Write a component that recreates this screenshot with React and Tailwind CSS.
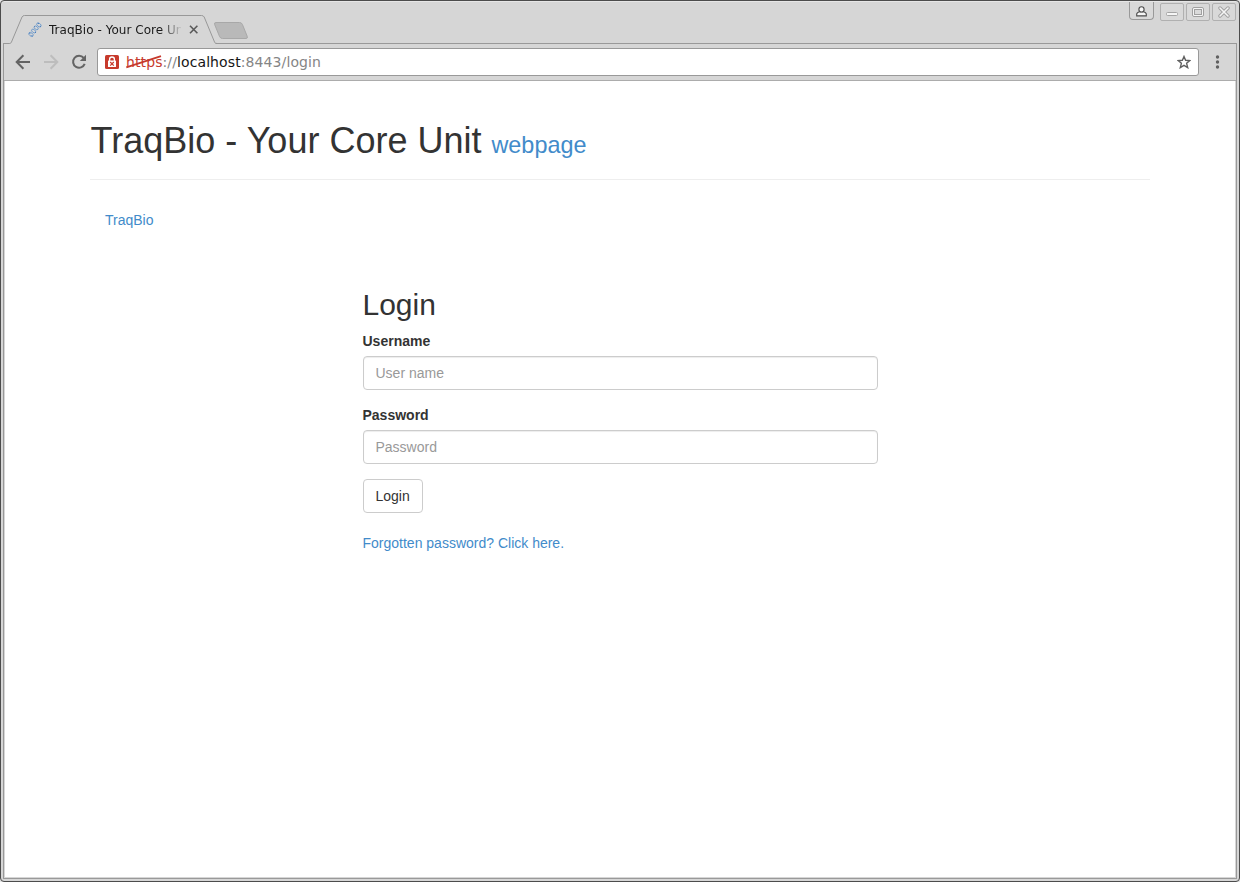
import React from "react";

function TabShape() {
  return (
    <svg className="absolute left-0 top-0" width="260" height="44" viewBox="3 1 260 44">
      <path d="M9 45 L9 43.5 L11 43 L22 17 Q22.8 15.5 24.5 15.5 H201.5 Q203.4 15.5 204.2 17 L215 43 L217 45 Z" fill="#d6d6d6" />
      <path d="M3 43.5 H9.5 Q10.8 43.5 11.4 42.2 L22 17 Q22.8 15.5 24.5 15.5 H201.5 Q203.4 15.5 204.2 17 L214.6 42.2 Q215.2 43.5 217 43.5" fill="none" stroke="#989898" />
      <path d="M216 22.5 H239.5 Q241.6 22.5 242.4 24.4 L247.2 36.3 Q248 38.5 246 38.5 H222.5 Q220.4 38.5 219.6 36.6 L214.6 24.4 Q214 22.5 216 22.5 Z" fill="#b9b9b9" stroke="#a8a8a8" />
    </svg>
  );
}

function Favicon() {
  return (
    <svg width="14" height="16" viewBox="0 0 14 16" fill="none" stroke="#6f9acb" strokeWidth="0.9" className="shrink-0">
      <ellipse cx="3" cy="12.4" rx="2.5" ry="1.6" transform="rotate(38 3 12.4)" />
      <ellipse cx="5.6" cy="9" rx="2.3" ry="1.5" transform="rotate(38 5.6 9)" />
      <ellipse cx="8.2" cy="5.9" rx="2.3" ry="1.5" transform="rotate(38 8.2 5.9)" />
      <ellipse cx="10.9" cy="2.9" rx="2.5" ry="1.6" transform="rotate(38 10.9 2.9)" />
      <path d="M1.2 11 L2.4 11.6 M3.4 13.6 L4.6 14.2 M7 10.2 L8 10.8 M6.2 4.2 L7 4.8 M9.8 1.2 L11 1.8 M11.8 4.4 L13 4.8" stroke="#3f78bb" />
    </svg>
  );
}

function WindowButton({ children }) {
  return (
    <div className="flex h-[18px] w-6 items-center justify-center rounded-[2px] border border-[#b0b0b0] bg-[#d9d9d9]">
      {children}
    </div>
  );
}

function WindowControls() {
  return (
    <div className="mr-px flex items-start">
      <div className="mr-[6px] mt-px flex h-[18px] w-[25px] items-center justify-center rounded-b-[4px] border border-t-0 border-[#999] bg-[#d9d9d9]">
        <svg className="mt-px" width="11" height="11" viewBox="0 0 11 11" fill="#f6f6f6" stroke="#4a4a4a" strokeWidth="1.1">
          <path d="M0.7 9.9 V8.2 Q0.7 6.6 3.6 5.8 H7.4 Q10.3 6.6 10.3 8.2 V9.9 Z" />
          <circle cx="5.5" cy="3.4" r="2.6" />
        </svg>
      </div>
      <div className="mt-[2px] flex gap-[2px]">
        <WindowButton>
          <svg width="12" height="12" viewBox="0 0 12 12">
            <rect x="0.5" y="6.5" width="11" height="3" rx="1" fill="#f5f5f5" stroke="#a4a4a4" />
          </svg>
        </WindowButton>
        <WindowButton>
          <svg width="12" height="12" viewBox="0 0 12 12" fill="none" stroke="#a0a0a0">
            <rect x="0.5" y="1.5" width="11" height="9" rx="1.5" fill="#f5f5f5" />
            <rect x="2.5" y="3.5" width="7" height="5" fill="#dadada" />
          </svg>
        </WindowButton>
        <WindowButton>
          <svg width="12" height="12" viewBox="0 0 12 12" fill="none" strokeLinecap="round">
            <path d="M2 2 L10 10 M10 2 L2 10" stroke="#a0a0a0" strokeWidth="3.4" />
            <path d="M2 2 L10 10 M10 2 L2 10" stroke="#f5f5f5" strokeWidth="1.6" />
          </svg>
        </WindowButton>
      </div>
    </div>
  );
}

function TabStrip() {
  return (
    <div className="relative z-10 flex h-[42px] justify-between">
      <TabShape />
      <div className="relative flex h-[28px] w-[200px] items-center self-end pl-[25px] pt-px">
        <Favicon />
        <div className="ml-[7px] w-[132px] overflow-hidden whitespace-nowrap font-['DejaVu_Sans',sans-serif] text-[12px] leading-4 tracking-[0.03px] text-[#1a1a1a] [mask-image:linear-gradient(to_right,black_112px,transparent_134px)]">
          TraqBio - Your Core Unit
        </div>
        <svg className="ml-[8px] shrink-0" width="9" height="9" viewBox="0 0 9 9" stroke="#5a5a5a" strokeWidth="1.6">
          <path d="M1 0.8 L8.4 8.2 M8.4 0.8 L1 8.2" />
        </svg>
      </div>
      <WindowControls />
    </div>
  );
}

function Toolbar() {
  return (
    <div className="flex h-[37px] items-center border-b border-[#acacac] pl-[11px] pr-[10px]">
      <svg width="16" height="16" viewBox="0 0 16 16" fill="none" stroke="#646464" strokeWidth="2">
        <path d="M15 8 H2 M8.4 1.3 L1.7 8 L8.4 14.7" />
      </svg>
      <svg className="ml-[12px]" width="16" height="16" viewBox="0 0 16 16" fill="none" stroke="#bdbdbd" strokeWidth="2">
        <path d="M1 8 H14 M7.6 1.3 L14.3 8 L7.6 14.7" />
      </svg>
      <svg className="ml-[12px]" width="16" height="16" viewBox="0 0 16 16">
        <path d="M12.7 3.9 A6 6 0 1 0 13.7 9.9" fill="none" stroke="#646464" strokeWidth="2" />
        <path d="M15 0.8 V7 H8.8 Z" fill="#646464" />
      </svg>
      <div className="ml-[10px] flex h-7 w-[1102px] items-center rounded-[3px] border border-[#999] bg-white pl-[7px] pr-[7px]">
        <svg width="14" height="14" viewBox="0 0 14 14">
          <rect width="14" height="14" rx="1.5" fill="#c73a2c" />
          <rect x="3" y="5.5" width="8" height="6.5" rx="0.5" fill="#fff" />
          <path d="M4.6 6 V4.2 A2.4 2.2 0 0 1 9.4 4.2 V6" fill="none" stroke="#fff" strokeWidth="1.3" />
          <path d="M5.2 7 L8.8 10.6 M8.8 7 L5.2 10.6" stroke="#c73a2c" strokeWidth="1.2" />
        </svg>
        <div className="ml-[7px] flex-1 whitespace-nowrap font-['DejaVu_Sans',sans-serif] text-[14px] leading-[18px] tracking-[0.1px] text-[#858585]">
          <span className="relative text-[#c73a2c]">
            https
            <svg className="absolute left-0 top-0" width="36" height="15" viewBox="0 0 36 15">
              <path d="M0.3 13.4 L35 2.2" stroke="#c73a2c" strokeWidth="1.8" />
            </svg>
          </span>
          ://<span className="text-[#151515]">localhost</span>:8443/login
        </div>
        <svg width="14" height="14" viewBox="0 0 14 14" fill="none" stroke="#606060" strokeWidth="1.4">
          <path d="M7 1.5 L8.6 5.3 L12.8 5.6 L9.6 8.3 L10.7 12.6 L7 10.3 L3.3 12.6 L4.4 8.3 L1.2 5.6 L5.4 5.3 Z" />
        </svg>
      </div>
      <svg className="ml-[16px]" width="5" height="14" viewBox="0 0 5 14" fill="#606060">
        <circle cx="2.5" cy="2" r="1.7" />
        <circle cx="2.5" cy="7" r="1.7" />
        <circle cx="2.5" cy="12" r="1.7" />
      </svg>
    </div>
  );
}

function Field({ label, placeholder, type }) {
  return (
    <div className="mb-[15px]">
      <label className="mb-[5px] block font-bold">{label}</label>
      <input
        type={type}
        placeholder={placeholder}
        className="block h-[34px] w-full rounded-[4px] border border-[#ccc] bg-white px-3 py-[6px] leading-5 shadow-[inset_0_1px_1px_rgba(0,0,0,0.075)] outline-none placeholder:text-[#999]"
      />
    </div>
  );
}

function LoginPage() {
  return (
    <main className="flex-1 bg-white px-[85px] pt-[40px] font-['Liberation_Sans',Arial,sans-serif] text-[14px] leading-5 text-[#333]">
      <h1 className="border-b border-[#eee] pb-[18px] pl-[0.6px] text-[36px] leading-[40px]">
        TraqBio - Your Core Unit{" "}
        <a className="text-[23.4px] leading-none text-[#428bca]" href="#">webpage</a>
      </h1>
      <nav className="mt-[30px] pl-[15px]">
        <a className="text-[#428bca]" href="#">TraqBio</a>
      </nav>
      <form className="mx-auto mt-[58px] w-[515px]">
        <h2 className="mb-[10px] text-[30px] leading-[33px]">Login</h2>
        <Field label="Username" placeholder="User name" type="text" />
        <Field label="Password" placeholder="Password" type="password" />
        <button type="button" className="block h-[34px] rounded-[4px] border border-[#ccc] bg-white px-3 leading-5">
          Login
        </button>
        <a className="mt-[20px] block text-[#428bca]" href="#">Forgotten password? Click here.</a>
      </form>
    </main>
  );
}

export default function App() {
  return (
    <div className="h-[882px] w-[1240px] overflow-hidden bg-[#e8e8e8]">
      <div className="flex h-full flex-col rounded-[4px] border border-[#4c4c4c] bg-[#d6d6d6] px-[2px] pb-[2px] shadow-[inset_0_1px_0_#e6e6e6]">
        <TabStrip />
        <div className="flex flex-1 flex-col border border-[#999]">
          <Toolbar />
          <div className="flex flex-1 flex-col border border-t-0 border-[#d6d6d6]">
            <LoginPage />
          </div>
        </div>
      </div>
    </div>
  );
}
